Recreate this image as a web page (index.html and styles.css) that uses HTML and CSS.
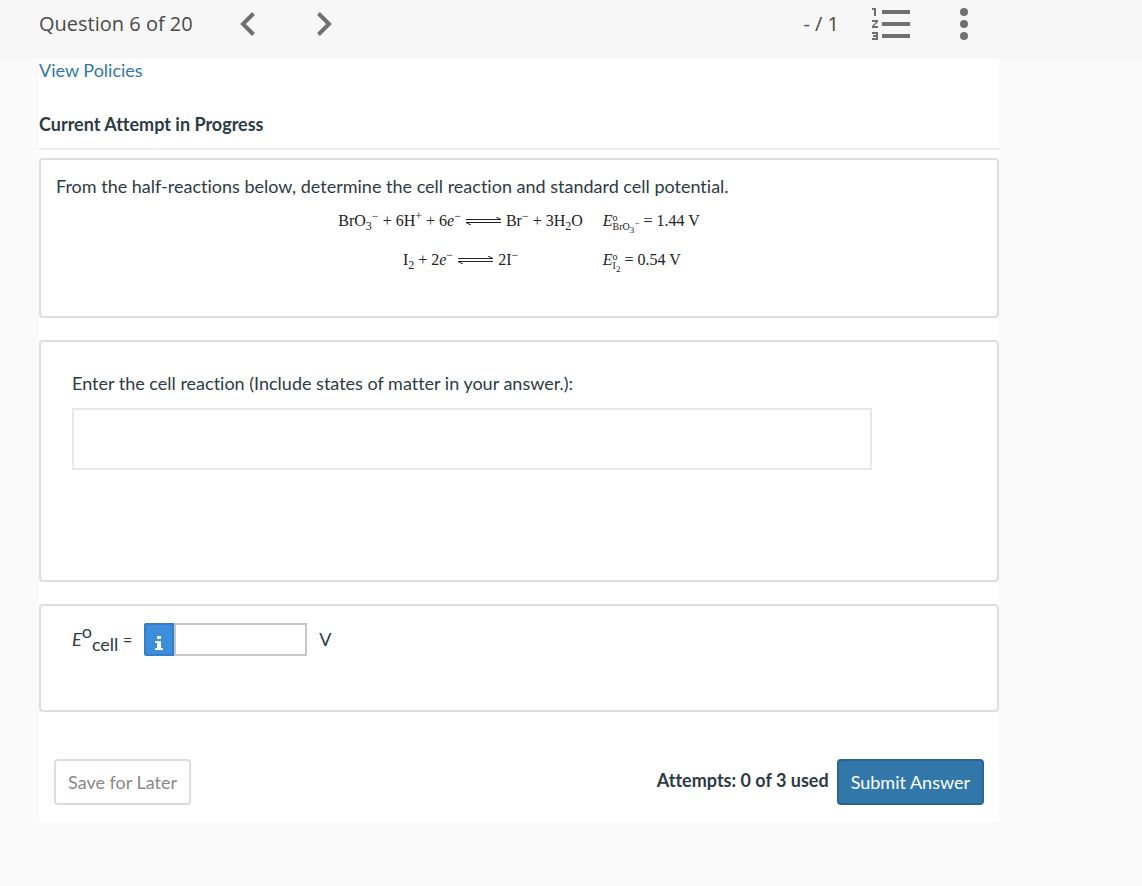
FILE: index.html
```
<!DOCTYPE html>
<html lang="en">
<head>
	<meta charset="UTF-8">
	<meta name="viewport" content="width=device-width, initial-scale=1">
	<title>Question 6 of 20</title>
	<link rel="stylesheet" href="styles.css">
</head>
<body>

<header class="topbar">
	<span class="question">Question 6 of 20</span>
	<button class="icon-btn prev" type="button" aria-label="Previous question">
		<svg width="16" height="24" viewBox="0 0 16 24"><path d="M13.500 1.500L3 12l10.500 10.500" fill="none" stroke="#707070" stroke-width="4"/></svg>
	</button>
	<button class="icon-btn next" type="button" aria-label="Next question">
		<svg width="16" height="24" viewBox="0 0 16 24"><path d="M2.500 1.500L13 12L2.500 22.500" fill="none" stroke="#707070" stroke-width="4"/></svg>
	</button>
	<span class="score">- / 1</span>
	<button class="icon-btn list" type="button" aria-label="Question list">
		<svg width="40" height="34" viewBox="0 0 40 34" fill="#707070">
			<path d="M11 3h28v4H11zM11 15h28v4H11zM11 27h28v4H11z"/>
			<path d="M1 1h4v8H3V3H1zM1 13h6v2l-4 4h4v2H1v-2l4-4H1zM1 25h6v8H1v-2h4v-1H2v-2h3v-1H1z"/>
		</svg>
	</button>
	<button class="icon-btn more" type="button" aria-label="More options">
		<svg width="8" height="34" viewBox="0 0 8 34" fill="#707070">
			<circle cx="4" cy="5" r="4"/><circle cx="4" cy="17" r="4"/><circle cx="4" cy="29" r="4"/>
		</svg>
	</button>
</header>

<main class="content">
	<a class="policies" href="#">View Policies</a>
	<h1>Current Attempt in Progress</h1>

	<section class="card prompt">
		<p>From the half-reactions below, determine the cell reaction and standard cell potential.</p>
		<div class="equations">
			<div class="reaction">BrO<sub>3</sub><sup>−</sup> + 6H<sup>+</sup> + 6<i>e</i><sup>−</sup>
				<svg class="arrows" width="37" height="8" viewBox="0 0 37 8"><path d="M1 2.500H36L31 0M36 5.500H1L6 8" fill="none" stroke="#222"/></svg>
				Br<sup>−</sup> + 3H<sub>2</sub>O</div>
			<div class="potential"><i>E</i><span class="stack"><span>o</span><span>BrO<sub>3</sub><sup>−</sup></span></span> = 1.44 V</div>
			<div class="reaction">I<sub>2</sub> + 2<i>e</i><sup>−</sup>
				<svg class="arrows" width="37" height="8" viewBox="0 0 37 8"><path d="M1 2.500H36L31 0M36 5.500H1L6 8" fill="none" stroke="#222"/></svg>
				2I<sup>−</sup></div>
			<div class="potential"><i>E</i><span class="stack"><span>o</span><span>I<sub>2</sub></span></span> = 0.54 V</div>
		</div>
	</section>

	<section class="card reaction-card">
		<label for="reaction">Enter the cell reaction (Include states of matter in your answer.):</label>
		<input class="reaction-input" id="reaction" type="text">
	</section>

	<section class="card cell-card">
		<label for="ecell"><i>E</i><sup>o</sup><sub>cell</sub> <small>=</small></label>
		<div class="number">
			<button class="info" type="button" aria-label="Number format info">
				<svg width="8" height="14" viewBox="0 0 8 14" fill="#fff"><path d="M2 0h4v3H2zM0 5h6v7h2v2H0v-2h2V7H0z"/></svg>
			</button>
			<input id="ecell" type="text">
		</div>
		<span>V</span>
	</section>

	<footer class="actions">
		<button class="btn" type="button">Save for Later</button>
		<strong>Attempts: 0 of 3 used</strong>
		<button class="btn btn-primary" type="submit">Submit Answer</button>
	</footer>
</main>

</body>
</html>
```

FILE: styles.css
```
* {
	box-sizing: border-box;
}

body {
	margin: 0;
	background: #fafafa;
	color: #2d3b45;
	font-family: Lato, sans-serif;
	font-size: 18px;
	line-height: 22px;
	font-variant-ligatures: none;
}

button, input {
	font: inherit;
}

.topbar {
	display: flex;
	align-items: center;
	height: 59px;
	padding: 0 174px 11px 39px;
	background: #f7f7f7;
	color: #4a4a4a;
	font-family: "Open Sans", sans-serif;
	font-size: 20px;
	line-height: 24px;
}

.icon-btn {
	display: flex;
	padding: 0;
	border: 0;
	background: none;
	cursor: pointer;
}

.prev {
	margin-left: 47px;
}

.next {
	margin-left: 60px;
}

.score {
	margin-left: auto;
}

.list {
	margin-left: 32px;
}

.more {
	margin-left: 49px;
}

.content {
	max-width: 960px;
	margin: 0 143px 64px 39px;
	background: #fff;
}

.policies {
	display: block;
	width: fit-content;
	color: #3277a9;
	text-decoration: none;
}

h1 {
	margin: 31px 0 8px;
	padding-bottom: 12px;
	border-bottom: 2px solid #eee;
	font-size: 18px;
	line-height: 24px;
}

.card {
	margin-bottom: 22px;
	border: 2px solid #ddd;
	border-radius: 4px;
}

.prompt {
	min-height: 160px;
	padding: 15px;
}

.prompt p {
	margin: 0;
}

.equations {
	display: grid;
	grid-template-columns: auto auto;
	justify-content: center;
	column-gap: 20px;
	row-gap: 15px;
	margin-top: 12px;
	color: #222;
	font-family: "Liberation Serif", serif;
	font-size: 16px;
	line-height: 24px;
}

.reaction {
	text-align: center;
}

.equations sub, .equations sup {
	font-size: 12px;
	line-height: 0;
}

.arrows {
	vertical-align: 1px;
}

.stack {
	display: inline-flex;
	flex-direction: column;
	vertical-align: middle;
	font-size: 10px;
	line-height: 9px;
}

.equations .stack sub, .equations .stack sup {
	font-size: 9px;
}

.reaction-card {
	min-height: 242px;
	padding: 30px 31px;
}

.reaction-card label {
	display: block;
}

.reaction-input {
	width: 100%;
	max-width: 800px;
	height: 62px;
	margin-top: 14px;
	padding: 0 12px;
	border: 2px solid #e8e8e8;
	background: #fff;
}

.cell-card {
	display: flex;
	align-items: flex-start;
	gap: 12px;
	min-height: 108px;
	padding: 17px 31px;
	line-height: 32px;
}

.cell-card sup, .cell-card sub {
	font-size: 18px;
	line-height: 0;
}

.cell-card sup {
	vertical-align: 8px;
}

.cell-card small {
	font-size: 16px;
}

.number {
	display: flex;
}

.info {
	display: flex;
	align-items: center;
	justify-content: center;
	width: 30px;
	height: 33px;
	padding: 6px 0 0;
	border: 2px solid #337ec9;
	border-radius: 2px 0 0 2px;
	background: #3d8ddd;
}

.number input {
	width: 133px;
	height: 33px;
	padding: 0 6px;
	border: 2px solid #c7c7c7;
	background: #fff;
}

.actions {
	display: flex;
	align-items: center;
	padding: 25px 15px 17px;
}

.actions strong {
	margin: 0 8px 4px auto;
}

.btn {
	height: 46px;
	padding: 0 12px;
	border: 2px solid #ddd;
	border-radius: 4px;
	background: #fff;
	color: #888;
	cursor: pointer;
}

.btn-primary {
	border-color: #2a6590;
	background: #3277a9;
	color: #fff;
}
```
